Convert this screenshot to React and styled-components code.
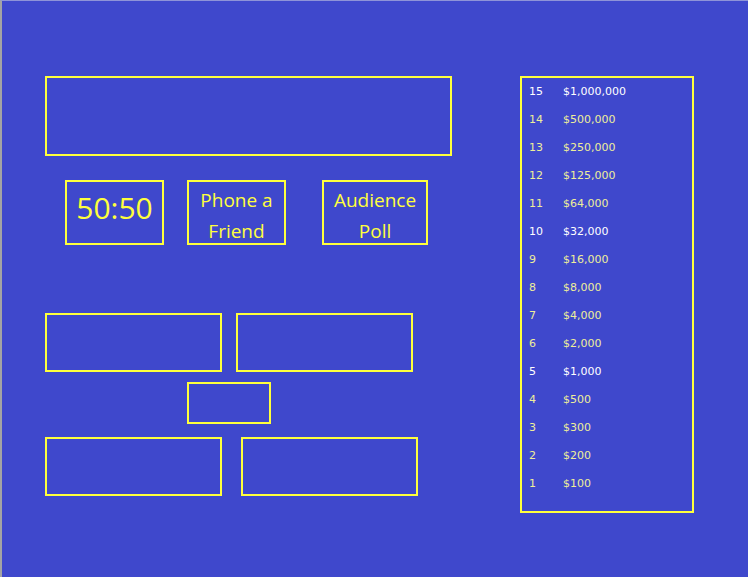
import React from 'react';
import styled, { createGlobalStyle } from 'styled-components';

const GlobalStyle = createGlobalStyle`
  html, body {
    margin: 0;
    padding: 0;
    background: #3f48cc;
  }
  * { box-sizing: border-box; }
`;

const Stage = styled.div`
  width: 748px;
  height: 577px;
  background: #3f48cc;
  border-left: 2px solid #a4a4a4;
  border-top: 1px solid #8f94d8;
  display: flex;
  align-items: flex-start;
  padding: 75px 0 0 43px;
  font-family: "Open Sans", "Liberation Sans", sans-serif;
`;

const LeftColumn = styled.div`
  display: flex;
  flex-direction: column;
  width: 407px;
`;

const Box = styled.div`
  border: 2px solid #ffff3c;
  width: ${({ $w }) => $w}px;
  height: ${({ $h }) => $h}px;
  margin-left: ${({ $ml }) => $ml || 0}px;
`;

const Lifelines = styled.div`
  display: flex;
  margin-top: 24px;
  padding-left: 20px;
`;

const Lifeline = styled.div`
  border: 2px solid #ffff3c;
  width: ${({ $w }) => $w}px;
  height: 65px;
  margin-left: ${({ $ml }) => $ml || 0}px;
  color: #ffff3c;
  display: flex;
  flex-direction: column;
  align-items: center;
  justify-content: center;
  text-align: center;
  font-size: ${({ $big }) => ($big ? '30px' : '19px')};
  line-height: ${({ $big }) => ($big ? '36px' : '31px')};
  padding-top: ${({ $big }) => ($big ? '0' : '6px')};
  padding-bottom: ${({ $big }) => ($big ? '10px' : '0')};
`;

const AnswerRow = styled.div`
  display: flex;
  margin-top: ${({ $mt }) => $mt}px;
`;

const Ladder = styled.div`
  border: 2px solid #ffff3c;
  width: 174px;
  height: 437px;
  margin-left: 68px;
  padding: 0 0 0 7px;
  font-family: "DejaVu Sans", Verdana, sans-serif;
  font-size: 11px;
`;

const Rung = styled.div`
  display: flex;
  align-items: center;
  height: 28px;
  padding-bottom: 2px;
  color: ${({ $milestone }) => ($milestone ? '#ffffff' : '#eeee9a')};
`;

const Level = styled.span`
  width: 34px;
`;

const prizes = [
  [15, '$1,000,000'],
  [14, '$500,000'],
  [13, '$250,000'],
  [12, '$125,000'],
  [11, '$64,000'],
  [10, '$32,000'],
  [9, '$16,000'],
  [8, '$8,000'],
  [7, '$4,000'],
  [6, '$2,000'],
  [5, '$1,000'],
  [4, '$500'],
  [3, '$300'],
  [2, '$200'],
  [1, '$100'],
];

export default function App() {
  return (
    <>
      <GlobalStyle />
      <Stage>
        <LeftColumn>
          <Box $w={407} $h={80} />
          <Lifelines>
            <Lifeline $w={99} $big>50:50</Lifeline>
            <Lifeline $w={99} $ml={23}>
              <span>Phone a</span>
              <span>Friend</span>
            </Lifeline>
            <Lifeline $w={106} $ml={36}>
              <span>Audience</span>
              <span>Poll</span>
            </Lifeline>
          </Lifelines>
          <AnswerRow $mt={68}>
            <Box $w={177} $h={59} />
            <Box $w={177} $h={59} $ml={14} />
          </AnswerRow>
          <AnswerRow $mt={10}>
            <Box $w={84} $h={42} $ml={142} />
          </AnswerRow>
          <AnswerRow $mt={13}>
            <Box $w={177} $h={59} />
            <Box $w={177} $h={59} $ml={19} />
          </AnswerRow>
        </LeftColumn>
        <Ladder>
          {prizes.map(([n, amount]) => (
            <Rung key={n} $milestone={n % 5 === 0}>
              <Level>{n}</Level>
              <span>{amount}</span>
            </Rung>
          ))}
        </Ladder>
      </Stage>
    </>
  );
}
